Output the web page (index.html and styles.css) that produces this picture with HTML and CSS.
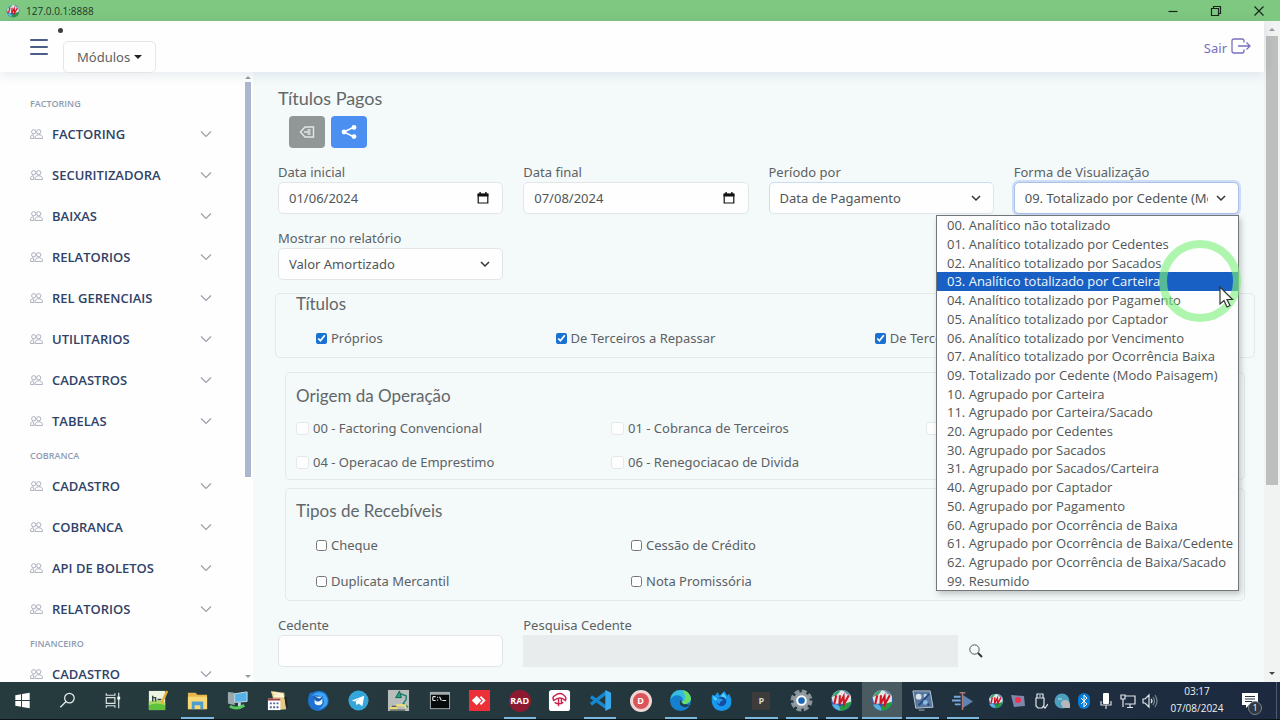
FILE: index.html
```html
<!DOCTYPE html>
<html lang="pt-BR">
<head>
<meta charset="utf-8">
<meta name="viewport" content="width=device-width, initial-scale=1">
<title>127.0.0.1:8888</title>
<link rel="stylesheet" href="styles.css">
</head>
<body>
<svg class="defs" aria-hidden="true">
  <defs>
    <symbol id="people" viewBox="0 0 14 12"><g fill="none" stroke="currentColor" stroke-width="1"><circle cx="4" cy="3.6" r="2.3"/><circle cx="9.4" cy="3.6" r="2.3"/><path d="M.6 10.8V9.4C.8 7.6 2 6.8 3.6 6.8M.6 10.8h4M5.6 10.8V9.6c.2-1.8 1.6-2.8 3.8-2.8s3.8 1 4 2.8v1.2zM3.4 7.2l1 3.2"/></g></symbol>
    <symbol id="chevron" viewBox="0 0 12 8"><path d="M1 1.5l5 5 5-5" fill="none" stroke="currentColor" stroke-width="1.1"/></symbol>
    <symbol id="calendar" viewBox="0 0 12 12"><path d="M1.2 2.4h9.6v8.6H1.2z" fill="none" stroke="#111" stroke-width="1.2"/><path d="M.6 1.4h10.8v3H.6zM2.4 0h1.4v2H2.4zM8.2 0h1.4v2H8.2z" fill="#111"/></symbol>
    <symbol id="iw" viewBox="0 0 22 22"><circle cx="11" cy="11" r="10" fill="#2c5fb4"/><path d="M1.500 8a10 10 0 0 1 18.500-1v7H3z" fill="#dfe6e6"/><path d="M1.500 8q3-6 9-7l-3 4z" fill="#3f9f71"/><path d="M12 1q5 0 8 5l-4-1z" fill="#6b8fa8"/><path d="M2 15q6-3 9 6-7-1-9-6z" fill="#58b4df"/><path d="M10 21q-2-5 4-7l6.500-2q-1 8-10.500 9z" fill="#2a9a3e"/><path d="M6 6L4 14.500M9.500 6L9 14.500 13 7l.3 7.500L18 6" fill="none" stroke="#cf1526" stroke-width="2"/></symbol>
  </defs>
</svg>

<div class="window">
  <header class="titlebar">
    <svg class="titlebar__logo"><use href="#iw"/></svg>
    <span class="titlebar__text">127.0.0.1:8888</span>
    <div class="titlebar__buttons">
      <button class="winbtn" type="button" aria-label="Minimizar"><svg viewBox="0 0 12 12"><path d="M1.500 6.500h9"/></svg></button>
      <button class="winbtn" type="button" aria-label="Restaurar"><svg viewBox="0 0 12 12"><path d="M1.500 3.500h7v7h-7zM3.500 3.500v-2h7v7h-2"/></svg></button>
      <button class="winbtn" type="button" aria-label="Fechar"><svg viewBox="0 0 12 12"><path d="M1.500 1.500l9 9M10.500 1.500l-9 9"/></svg></button>
    </div>
  </header>

  <div class="viewport">
    <div class="page">
      <div class="topbar">
        <button class="burger" type="button" aria-label="Menu"><i></i><i></i><i></i></button>
        <div class="modules"><span class="modules__dot"></span><button class="modules__btn" type="button">Módulos<span class="caret"></span></button></div>
        <a class="logout" href="#">Sair
          <svg viewBox="0 0 20 16"><path d="M13 4.500V3q0-2-2-2H3Q1 1 1 3v10q0 2 2 2h8q2 0 2-2v-1.500M7 8h12M15.500 4.500L19 8l-3.500 3.500"/></svg></a>
      </div>

      <div class="shell">
        <nav class="sidebar">
          <div class="menu">
            <h2 class="menu__title">FACTORING</h2>
            <button class="menu__item" type="button"><svg class="menu__icon"><use href="#people"/></svg>FACTORING<svg class="menu__chev"><use href="#chevron"/></svg></button>
            <button class="menu__item" type="button"><svg class="menu__icon"><use href="#people"/></svg>SECURITIZADORA<svg class="menu__chev"><use href="#chevron"/></svg></button>
            <button class="menu__item" type="button"><svg class="menu__icon"><use href="#people"/></svg>BAIXAS<svg class="menu__chev"><use href="#chevron"/></svg></button>
            <button class="menu__item" type="button"><svg class="menu__icon"><use href="#people"/></svg>RELATORIOS<svg class="menu__chev"><use href="#chevron"/></svg></button>
            <button class="menu__item" type="button"><svg class="menu__icon"><use href="#people"/></svg>REL GERENCIAIS<svg class="menu__chev"><use href="#chevron"/></svg></button>
            <button class="menu__item" type="button"><svg class="menu__icon"><use href="#people"/></svg>UTILITARIOS<svg class="menu__chev"><use href="#chevron"/></svg></button>
            <button class="menu__item" type="button"><svg class="menu__icon"><use href="#people"/></svg>CADASTROS<svg class="menu__chev"><use href="#chevron"/></svg></button>
            <button class="menu__item" type="button"><svg class="menu__icon"><use href="#people"/></svg>TABELAS<svg class="menu__chev"><use href="#chevron"/></svg></button>
            <h2 class="menu__title">COBRANCA</h2>
            <button class="menu__item" type="button"><svg class="menu__icon"><use href="#people"/></svg>CADASTRO<svg class="menu__chev"><use href="#chevron"/></svg></button>
            <button class="menu__item" type="button"><svg class="menu__icon"><use href="#people"/></svg>COBRANCA<svg class="menu__chev"><use href="#chevron"/></svg></button>
            <button class="menu__item" type="button"><svg class="menu__icon"><use href="#people"/></svg>API DE BOLETOS<svg class="menu__chev"><use href="#chevron"/></svg></button>
            <button class="menu__item" type="button"><svg class="menu__icon"><use href="#people"/></svg>RELATORIOS<svg class="menu__chev"><use href="#chevron"/></svg></button>
            <h2 class="menu__title">FINANCEIRO</h2>
            <button class="menu__item" type="button"><svg class="menu__icon"><use href="#people"/></svg>CADASTRO<svg class="menu__chev"><use href="#chevron"/></svg></button>
          </div>
          <div class="minibar" aria-hidden="true"><span class="tri tri--up"></span><span class="minibar__thumb"></span><span class="minibar__rest"></span><span class="tri tri--down"></span></div>
        </nav>

        <main class="content">
          <h1 class="heading heading--page">Títulos Pagos</h1>
          <div class="actions">
            <button class="action action--grey" type="button" aria-label="Voltar"><svg viewBox="0 0 16 14"><path d="M6 2h8.500v10H6L1.500 7zM11.500 5H8.500M8.500 9h3M5 7h6.500"/></svg></button>
            <button class="action action--blue" type="button" aria-label="Compartilhar"><svg viewBox="0 0 16 14"><path d="M3 7l10-5M3 7l10 5"/><circle cx="3" cy="7" r="2.400"/><circle cx="13" cy="2.400" r="2.400"/><circle cx="13" cy="11.600" r="2.400"/></svg></button>
          </div>

          <div class="fields">
            <div class="field"><label for="ini">Data inicial</label>
              <div class="control"><input id="ini" type="text" value="01/06/2024"><button class="control__cal" type="button" aria-label="Calendário"><svg><use href="#calendar"/></svg></button></div></div>
            <div class="field"><label for="fim">Data final</label>
              <div class="control"><input id="fim" type="text" value="07/08/2024"><button class="control__cal" type="button" aria-label="Calendário"><svg><use href="#calendar"/></svg></button></div></div>
            <div class="field"><label for="per">Período por</label>
              <select class="select select--touched" id="per"><option>Data de Pagamento</option></select></div>
            <div class="field"><label for="forma">Forma de Visualização</label>
              <select class="select select--focus" id="forma"><option>09. Totalizado por Cedente (Modo Paisagem)</option></select>
              <ul class="options" role="listbox" aria-label="Forma de Visualização">
                <li role="option">00. Analítico não totalizado</li>
                <li role="option">01. Analítico totalizado por Cedentes</li>
                <li role="option">02. Analítico totalizado por Sacados</li>
                <li role="option" class="is-active" aria-selected="true">03. Analítico totalizado por Carteira</li>
                <li role="option">04. Analítico totalizado por Pagamento</li>
                <li role="option">05. Analítico totalizado por Captador</li>
                <li role="option">06. Analítico totalizado por Vencimento</li>
                <li role="option">07. Analítico totalizado por Ocorrência Baixa</li>
                <li role="option">09. Totalizado por Cedente (Modo Paisagem)</li>
                <li role="option">10. Agrupado por Carteira</li>
                <li role="option">11. Agrupado por Carteira/Sacado</li>
                <li role="option">20. Agrupado por Cedentes</li>
                <li role="option">30. Agrupado por Sacados</li>
                <li role="option">31. Agrupado por Sacados/Carteira</li>
                <li role="option">40. Agrupado por Captador</li>
                <li role="option">50. Agrupado por Pagamento</li>
                <li role="option">60. Agrupado por Ocorrência de Baixa</li>
                <li role="option">61. Agrupado por Ocorrência de Baixa/Cedente</li>
                <li role="option">62. Agrupado por Ocorrência de Baixa/Sacado</li>
                <li role="option">99. Resumido</li>
              </ul>
              <svg class="pointer" viewBox="0 0 84 84" aria-hidden="true"><circle cx="42" cy="42" r="37" fill="none" stroke="#7df07d" stroke-opacity=".62" stroke-width="8"/><path d="M62 48v17l4-3.500 3 6.500 3-1.500-3-6h5.500z" fill="#fff" stroke="#333" stroke-width="1.200"/></svg>
            </div>
            <div class="field"><label for="mostrar">Mostrar no relatório</label>
              <select class="select" id="mostrar"><option>Valor Amortizado</option></select></div>
          </div>

          <section class="box box--titles">
            <h2 class="heading">Títulos</h2>
            <div class="checks checks--titles">
              <label class="check"><input type="checkbox" checked>Próprios</label>
              <label class="check"><input type="checkbox" checked>De Terceiros a Repassar</label>
              <label class="check"><input type="checkbox" checked>De Terceiros</label>
            </div>
          </section>

          <section class="box box--origin">
            <h2 class="heading">Origem da Operação</h2>
            <div class="checks checks--soft">
              <label class="check"><input type="checkbox">00 - Factoring Convencional</label>
              <label class="check"><input type="checkbox">01 - Cobranca de Terceiros</label>
              <label class="check"><input type="checkbox" aria-label="Outra operação"></label>
              <label class="check"><input type="checkbox">04 - Operacao de Emprestimo</label>
              <label class="check"><input type="checkbox">06 - Renegociacao de Divida</label>
            </div>
          </section>

          <section class="box box--types">
            <h2 class="heading">Tipos de Recebíveis</h2>
            <div class="checks checks--types">
              <label class="check"><input type="checkbox">Cheque</label>
              <label class="check"><input type="checkbox">Cessão de Crédito</label>
              <span></span>
              <label class="check"><input type="checkbox">Duplicata Mercantil</label>
              <label class="check"><input type="checkbox">Nota Promissória</label>
            </div>
          </section>

          <div class="fields fields--last">
            <div class="field"><label for="ced">Cedente</label><div class="control"><input id="ced" type="text"></div></div>
            <div class="field field--wide"><label for="pesq">Pesquisa Cedente</label>
              <div class="lookup"><input class="lookup__input" id="pesq" type="text" disabled>
                <button class="lookup__btn" type="button" aria-label="Pesquisar"><svg viewBox="0 0 14 14"><circle cx="5.500" cy="5.500" r="4.700" fill="none" stroke="#555"/><path d="M9 9l4 4" stroke="#333" stroke-width="2"/></svg></button></div></div>
          </div>
        </main>
      </div>
    </div>
    <div class="scroll" aria-hidden="true"><span class="tri tri--up"></span><span class="scroll__thumb"></span><span class="scroll__rest"></span><span class="tri tri--down tri--dark"></span></div>
  </div>

  <footer class="taskbar">
    <div class="system">
      <button class="task" type="button" aria-label="Iniciar"><svg viewBox="0 0 24 24"><path fill="#fff" d="M4.500 6.500l6-1v6h-6zM11.500 5.300l8-1.300v7.500h-8zM4.500 12.500h6v6l-6-1zM11.500 12.500h8V20l-8-1.300z"/></svg></button>
      <button class="task" type="button" aria-label="Pesquisar"><svg viewBox="0 0 24 24" fill="none" stroke="#e8eeee" stroke-width="1.300"><circle cx="14" cy="9.500" r="5"/><path d="M10.500 13L4.500 19"/></svg></button>
      <button class="task" type="button" aria-label="Visão de tarefas"><svg viewBox="0 0 24 24" fill="none" stroke="#dfe6e6" stroke-width="1.200"><path d="M5.500 4.500v2h9v-2M5.500 9h9v6h-9zM5.500 19.500v-2h9v2M18.500 4v16"/><path d="M17 8h3v3h-3z" fill="#fff" stroke="none"/></svg></button>
    </div>
    <div class="apps">
      <button class="task" type="button" aria-label="Editor"><svg viewBox="0 0 24 24"><path fill="#edf3df" d="M3 2h17v20H3z"/><path fill="#5fc23d" d="M3 15q9-5 17 0v7H3z"/><path fill="#a9db63" d="M3 13q9-3 17 1v3q-9-4-17 0z"/><path d="M7 7v6M7 9h3v4M12 11h4" stroke="#344" stroke-width="1.500" fill="none"/><path d="M22 2l-6 13" stroke="#e5b236" stroke-width="2.500"/></svg></button>
      <button class="task task--open" type="button" aria-label="Arquivos"><svg viewBox="0 0 24 24"><path fill="#e9b44a" d="M2 4h8l2 2h10v15H2z"/><path fill="#f8d775" d="M2 8h20v13H2z"/><path fill="#4a9fd0" d="M6 13h12v8h-3v-4H9v4H6z"/></svg></button>
      <button class="task" type="button" aria-label="Acesso remoto"><svg viewBox="0 0 24 24"><path fill="#9aa8b0" d="M2 3l7 1v13l-7-2z"/><path fill="#57b2ea" stroke="#c4d9e4" d="M9 5l13-2v10l-13 1z"/><path d="M14 14v4" stroke="#c4d9e4" stroke-width="3"/><path d="M4 18q8 4 15-1" stroke="#55c95d" stroke-width="3" fill="none"/></svg></button>
      <button class="task" type="button" aria-label="Agenda"><svg viewBox="0 0 24 24"><path fill="#e3c986" d="M5 2l14 2 2 17-10 1z"/><path d="M7 4l11 2M8 7l11 1" stroke="#fff8df" stroke-width="2"/><path fill="#fff" d="M2 10h13v12H2z"/><path fill="#a43b42" d="M2 10h13v2H2z"/><path d="M4 15h9M4 19h9" stroke="#55649a" stroke-width="2" stroke-dasharray="2 1.500"/><path d="M20 8l2 11" stroke="#222" stroke-width="2"/></svg></button>
      <button class="task" type="button" aria-label="Thunderbird"><svg viewBox="0 0 24 24"><path fill="#1d72d2" d="M3 4q3 0 4-1 7-3 12 1 5 5 3 12-4 7-11 7Q2 22 1 13q0-4 2-9z"/><path fill="#3ea6f4" d="M5 7q6-6 13-2 5 5 3 11-4 5-9 5 8-4 5-11-4-5-12-3z"/><path fill="#edf4f9" d="M8 8h8v7q-4 4-8 0z"/><path fill="#1760b5" d="M6 7q3 7 6 6 4-1 5-6l-4 3z"/></svg></button>
      <button class="task" type="button" aria-label="Telegram"><svg viewBox="0 0 24 24"><circle cx="12" cy="12" r="10.500" fill="#35a6da"/><path fill="#fff" d="M5 12l13-5-2 11-4-3-2 2-1-4 5-4-6 4z"/></svg></button>
      <button class="task" type="button" aria-label="Luminária"><svg viewBox="0 0 24 24"><path fill="#b9bdbb" d="M1 1h22v22H1z"/><path d="M14 5l6 2v4l-3 4 5 4" stroke="#178678" stroke-width="1.500" fill="none"/><path fill="#21a487" stroke="#145f50" d="M9 9l4-7 2 7z"/><path d="M3 20h7v-3h9v3" stroke="#f0df75" stroke-width="2" fill="none"/><path d="M3 22h16M5 18h5" stroke="#353c34"/></svg></button>
      <button class="task" type="button" aria-label="Terminal"><svg viewBox="0 0 24 24"><path fill="#a4adad" d="M2 3h21v18H2z"/><path fill="#080b0b" d="M3 6h19v14H3z"/><path d="M5 8v4M5 8h3M5 12h3M10 8v1M10 11v1M12 8l2 4M15 12h4" stroke="#e7e7e7" stroke-width="1.200"/></svg></button>
      <button class="task" type="button" aria-label="AnyDesk"><svg viewBox="0 0 24 24"><path fill="#ec3037" d="M1 1h22v22H1z"/><path fill="#fff" d="M9 7l5 5-5 5-5-5z"/><path d="M13 8l4 4-4 4" fill="none" stroke="#fff" stroke-width="2"/></svg></button>
      <button class="task task--open" type="button" aria-label="RAD Studio"><span class="disc disc--rad">RAD</span></button>
      <button class="task" type="button" aria-label="Banco"><svg viewBox="0 0 24 24"><rect x="1" y="1" width="22" height="22" rx="3" fill="#fff"/><path d="M6 12q-2-3 1-5 5-4 9-1 4 3 2 6-5-5-12 0zM11 10v8M14 10v6M7 14q4 3 9 0" fill="none" stroke="#c9204d" stroke-width="1.500"/></svg></button>
      <button class="task task--open" type="button" aria-label="VS Code"><svg viewBox="0 0 24 24"><path d="M2 8l17 12M2 16L19 3" stroke="#1686ce" stroke-width="3.500"/><path fill="#38a9ec" d="M17 1l6 3v16l-6 3z"/></svg></button>
      <button class="task" type="button" aria-label="D"><span class="disc disc--d">D</span></button>
      <button class="task task--open" type="button" aria-label="Edge"><svg viewBox="0 0 24 24"><circle cx="12" cy="12" r="11" fill="#1680ce"/><path fill="#37bce0" d="M1 11Q3 1 12 1q9 0 11 9-1 6-8 6l-2-2q3-3 0-6-6-4-12 3z"/><path fill="#6add69" d="M14 1q9 2 9 10-2 5-8 5l-2-2q5-3 4-7z"/><path fill="#1c3b4b" d="M12 11q-3 7 5 8l5-2q-2-1-7-1-3-2-3-5z"/></svg></button>
      <button class="task" type="button" aria-label="Firefox Developer"><svg viewBox="0 0 24 24"><path fill="#1799ef" d="M2 6l3 1 3-4 2 4 5-5 3 5 2-2 2 5q2 12-10 13Q0 22 2 6z"/><path fill="#54d3f6" d="M3 7l6 4 5-7 3 5-4 6-9-4z"/><circle cx="12" cy="13" r="5" fill="#164da2"/><path fill="#249de9" d="M7 10q4-1 7 2-4 0-4 4-4-2-3-6z"/></svg></button>
      <button class="task task--open" type="button" aria-label="P"><span class="disc disc--p">P</span></button>
      <button class="task task--open" type="button" aria-label="Configurações"><svg viewBox="0 0 24 24"><circle cx="12" cy="12" r="9.500" fill="none" stroke="#8a939a" stroke-width="4" stroke-dasharray="5 2.460"/><circle cx="12" cy="12" r="8.500" fill="#929ba2"/><circle cx="12" cy="12" r="5.500" fill="#fff"/><circle cx="12" cy="12" r="3.500" fill="#1b67b5"/></svg></button>
      <button class="task task--open" type="button" aria-label="IntraWeb"><svg><use href="#iw"/></svg></button>
      <button class="task task--active" type="button" aria-label="IntraWeb ativo"><svg><use href="#iw"/></svg></button>
      <button class="task task--open" type="button" aria-label="Projeto"><svg viewBox="0 0 24 24"><path fill="#58779f" stroke="#b8c7d8" d="M2 2h18l3 17-18 1z"/><circle cx="8" cy="8" r="3" fill="#dbe3e9"/><circle cx="15" cy="7" r="2" fill="#b5d2e8"/><path d="M8 17l11-12M13 12l6 5" stroke="#284a7d" stroke-width="2"/><circle cx="15" cy="14" r="2.500" fill="#8ab9e8"/><path d="M8 22h6" stroke="#adb7c1"/></svg></button>
      <button class="task task--open" type="button" aria-label="Serviço"><svg viewBox="0 0 24 24"><path d="M3 8h7M1 12h9M4 16h6" stroke="#78a9dc" stroke-width="2"/><path fill="#5c83b5" d="M12 6l11 7-11 7z"/><path d="M12 4v18M9 4h6" stroke="#b07774" stroke-width="1.500"/></svg></button>
    </div>
    <div class="tray">
      <svg><use href="#iw"/></svg>
      <svg viewBox="0 0 16 16"><path fill="#7d86ac" d="M1 2l13 1 1 10-11 1z"/><circle cx="8" cy="7" r="3" fill="#ee3350"/></svg>
      <svg viewBox="0 0 16 16" fill="none" stroke="#e2e7eb" stroke-width="1.200"><path d="M5 5V1h6v4M4 5h8v7l-2 3H6l-2-2zM11 13l2 2 3-4M7 3h2"/></svg>
      <svg viewBox="0 0 16 16"><circle cx="8" cy="8" r="7.500" fill="#4d9fbd"/><path fill="#b4b8b9" d="M7 11q0-4 4-4t5 4v4H9z"/><path d="M4 6h4" stroke="#b8e6ef"/></svg>
      <svg viewBox="0 0 16 16"><rect x="2" width="12" height="16" rx="6" fill="#087bd4"/><path d="M5 5l6 6-3 3V2l3 3-6 6" fill="none" stroke="#fff"/></svg>
      <svg viewBox="0 0 16 16"><rect x="5" width="6" height="11" rx="1" fill="#fff"/><path d="M3 8v4h10V8M8 12v4" fill="none" stroke="#d5dadd" stroke-width="1.200"/></svg>
      <svg viewBox="0 0 16 16" fill="none" stroke="#e2e7eb" stroke-width="1.200"><path d="M5 3h10v8H5M10 11v3M7 14.500h6M1 2h4v4H1zM3 6v8"/></svg>
      <svg viewBox="0 0 16 16" fill="none" stroke="#e2e7eb" stroke-width="1.200"><path d="M1 6h2l4-4v12l-4-4H1zM9 6q2 2 0 4"/><path d="M11 4q3 4 0 8M13 2q4 6 0 12" stroke="#7b8794"/></svg>
    </div>
    <div class="clock"><span>03:17</span><span>07/08/2024</span></div>
    <button class="notice" type="button" aria-label="Notificações"><svg viewBox="0 0 18 18"><path fill="#fff" d="M1 1h16v12H8l-3 3v-3H1z"/><path d="M4 4.500h10M4 7h10M4 9.500h7" stroke="#263343"/></svg><span class="notice__count">1</span></button>
    <span class="desktop-edge"></span>
  </footer>
</div>
</body>
</html>
```

FILE: styles.css
```css
* { box-sizing: border-box; }
body { margin: 0; font-family: "Noto Sans", "Open Sans", sans-serif; font-size: 13px; color: #5c6264; background: #fdfefd; }
button, input, select { font: inherit; color: inherit; }
button { border: 0; padding: 0; background: none; }
h1, h2, ul { margin: 0; padding: 0; }
.defs { position: absolute; width: 0; height: 0; }
.window { display: flex; flex-direction: column; height: 100vh; overflow: hidden; }

.titlebar { display: flex; align-items: center; flex: none; height: 21px; padding-left: 6px; background: #7fc881; color: #22372a; font-family: "Open Sans", sans-serif; font-size: 10px; }
.titlebar__logo { width: 14px; height: 14px; margin-right: 6px; }
.titlebar__buttons { display: flex; margin-left: auto; }
.winbtn { display: flex; justify-content: center; width: 43px; }
.winbtn svg { width: 12px; height: 12px; fill: none; stroke: #17271b; stroke-width: 1.2; }

.viewport { display: flex; flex: 1; min-height: 0; }
.page { display: flex; flex-direction: column; flex: 1; min-width: 0; }
.topbar { display: flex; align-items: flex-start; flex: none; height: 51px; padding: 0 13px 0 30px; background: #fdfefd; box-shadow: 0 2px 12px rgba(1, 41, 112, .11); position: relative; z-index: 1; }
.burger { display: grid; gap: 5px; width: 18px; margin-top: 18px; }
.burger i { height: 2px; border-radius: 1px; background: #4c5d88; }
.modules { position: relative; margin: 20px 0 0 15px; }
.modules__dot { position: absolute; left: -5px; top: -13px; width: 5px; height: 5px; border-radius: 50%; background: #3c3f40; }
.modules__btn { display: flex; align-items: center; gap: 4px; height: 32px; padding: 0 13px; border: 1px solid #e4e6e8; border-radius: 5px; background: #fefefe; }
.caret { border: 4px solid transparent; border-top-color: #222; border-bottom: 0; }
.logout { display: flex; align-items: center; gap: 4px; margin: 17px 0 0 auto; color: #7770bf; text-decoration: none; line-height: 20px; }
.logout svg { width: 20px; height: 16px; margin-bottom: 4px; fill: none; stroke: currentColor; stroke-width: 1.3; }

.shell { display: flex; flex: 1; min-height: 0; }
.sidebar { display: flex; flex: none; width: 253px; background: #fdfefd; overflow: hidden; }
.menu { flex: 1; padding: 17px 31px 0 30px; font-family: "Open Sans", sans-serif; }
.menu__title { height: 24px; padding-top: 4px; font-size: 9px; line-height: 22px; font-weight: 600; color: #8f9bb3; }
.menu__item { display: flex; align-items: center; width: 100%; height: 41px; color: #304268; font-size: 13px; font-weight: 600; }
.menu__icon { width: 13px; height: 12px; margin-right: 9px; color: #a5aabb; }
.menu__chev { width: 12px; height: 8px; margin-left: auto; color: #969da8; }
.minibar { display: flex; flex-direction: column; align-items: center; width: 9px; margin-right: 1px; padding: 4px 0; }
.minibar__thumb { flex: 2 1 0; width: 6px; margin-top: 3px; background: #acb6ce; }
.minibar__rest { flex: 1 1 0; }
.tri { border: 3px solid transparent; flex: none; }
.tri--up { border-bottom-color: #9a9d9f; border-top: 0; }
.tri--down { border-top-color: #9a9d9f; border-bottom: 0; }
.tri--dark { border-top-color: #444; }
.scroll { display: flex; flex-direction: column; align-items: center; flex: none; width: 16px; padding: 7px 0; background: #f1f3f2; }
.scroll__thumb { flex: 447 1 0; width: 12px; margin-top: 5px; background: #bcbfbd; }
.scroll__rest { flex: 186 1 0; }

.content { flex: 1; min-width: 0; padding: 15px 25px 0; background: #f4f9fa; }
.heading { font-family: Lato, "Open Sans", sans-serif; font-size: 17px; line-height: 22px; font-weight: 400; color: #626769; }
.heading--page { font-size: 18px; }
.actions { display: flex; gap: 6px; padding: 7px 11px 14px; }
.action { display: flex; align-items: center; justify-content: center; width: 36px; height: 32px; border-radius: 4px; }
.action--grey { background: #919796; color: #e4e8e7; }
.action--blue { background: #4b8ff1; color: #fff; }
.action svg { width: 16px; height: 14px; fill: none; stroke: currentColor; stroke-width: 1.4; }
.action--blue circle { fill: currentColor; stroke: none; }

.fields { display: grid; grid-template-columns: repeat(4, minmax(0, 1fr)); gap: 14px 20px; }
.field { position: relative; }
.field--wide { grid-column: span 2; }
.field label { display: block; line-height: 20px; }
.control { display: flex; align-items: center; height: 32px; padding-right: 13px; border: 1px solid #e2e6e9; border-radius: 5px; background: #fefefe; color: #505657; }
.control input { flex: 1; min-width: 0; height: 30px; padding: 0 10px; border: 0; background: none; outline: 0; }
.control__cal svg { display: block; width: 12px; height: 12px; }
.select { display: block; width: 100%; height: 32px; padding: 0 30px 0 10px; border: 1px solid #e2e6e9; border-radius: 5px; appearance: none; color: #505657; background: #fefefe url("data:image/svg+xml,%3Csvg xmlns='http://www.w3.org/2000/svg' viewBox='0 0 10 8'%3E%3Cpath d='M1 2l4 4 4-4' fill='none' stroke='%23333' stroke-width='1.5'/%3E%3C/svg%3E") no-repeat right 12px center / 10px 8px; }
.select--touched { border-top-color: #c9dcf3; border-left-color: #c9dcf3; }
.select--focus { border-color: #a9c0ea; box-shadow: 0 0 0 2px #cddcf7; }
.options { position: absolute; z-index: 2; top: 53px; right: 0; display: grid; grid-template-columns: minmax(0, 1fr); grid-auto-rows: 1fr; width: 303px; height: 376px; list-style: none; border: 1px solid #727879; background: #fefefe; box-shadow: 2px 3px 6px rgba(0, 0, 0, .22); color: #505657; font-family: "Open Sans", sans-serif; }
.options li { display: flex; align-items: center; min-height: 0; padding-left: 10px; line-height: 18px; white-space: nowrap; }
.options .is-active { background: #1860c4; color: #f3f7fc; }
.pointer { position: absolute; z-index: 3; top: 77px; right: -3px; width: 84px; height: 84px; pointer-events: none; }

.box { border: 1px solid #e3e8ea; border-radius: 5px; }
.box--titles { margin: 13px -16px 0 -3px; padding: 0 10px 2px; }
.box--titles .heading { padding-left: 10px; line-height: 20px; }
.box--origin { margin: 14px -6px 0 7px; padding: 12px 3px 0 10px; }
.box--types { margin: 8px -6px 0 7px; padding: 11px 3px 1px 10px; }
.checks { display: grid; grid-template-columns: repeat(3, 1fr); padding-top: 5px; }
.check { display: flex; align-items: center; gap: 4px; height: 34px; }
.check input { width: 11px; height: 11px; margin: 0; accent-color: #1972d2; }
.checks--titles { grid-template-columns: 3fr 4fr 5fr; padding-top: 7px; }
.checks--titles .check { padding-left: 30px; }
.checks--soft { padding-top: 4px; }
.checks--soft .check input { appearance: none; width: 13px; height: 13px; border: 1px solid #e6e9eb; border-radius: 3px; background: #fefefe; }
.checks--types .check { height: 36px; padding-left: 20px; }
.fields--last { margin-top: 14px; }
.lookup { display: flex; align-items: center; gap: 11px; }
.lookup__input { flex: 1; min-width: 0; height: 32px; border: 0; background: #e8eced; }
.lookup__btn { flex: none; width: 25px; text-align: left; }
.lookup__btn svg { display: block; width: 14px; height: 14px; }

.taskbar { display: flex; flex: none; height: 38px; border-bottom: 1px solid #0a1518; background: linear-gradient(90deg, #263b3e, #23363d 60%, #1c2940); font-family: "Open Sans", sans-serif; }
.system { display: flex; flex: none; width: 135px; margin-right: 2px; }
.apps { display: flex; flex: 1; }
.task { position: relative; display: flex; align-items: center; justify-content: center; flex: 1 1 0; }
.task svg { width: 23px; height: 23px; }
.task--open::after, .task--active::after { content: ""; position: absolute; bottom: 0; left: 4px; right: 4px; height: 2px; background: #7db9df; }
.task--active { background: #4a5b61; }
.task--active::after { left: 0; right: 0; }
.disc { display: flex; align-items: center; justify-content: center; width: 22px; height: 22px; border-radius: 50%; color: #fff; font-size: 9px; font-weight: 700; }
.disc--rad { background: #8d1a30; }
.disc--d { border: 3px solid #f0d6d5; background: #d9555a; }
.disc--p { width: 18px; height: 18px; border-radius: 1px; background: #3d3c3b; color: #d9d7d4; }
.tray { display: flex; align-items: center; gap: 6px; flex: none; padding: 0 5px; }
.tray svg { width: 16px; height: 16px; }
.clock { display: flex; flex-direction: column; align-items: center; justify-content: center; flex: none; width: 68px; padding-bottom: 2px; color: #eef1f4; font-size: 10px; line-height: 17px; }
.notice { position: relative; flex: none; width: 40px; padding-left: 10px; }
.notice svg { display: block; width: 18px; height: 18px; }
.notice__count { position: absolute; left: 17px; bottom: 4px; width: 14px; height: 14px; border: 1px solid #7c848c; border-radius: 50%; background: #303942; color: #fff; font-size: 9px; line-height: 12px; }
.desktop-edge { width: 1px; margin: 0 3px 0 5px; background: #4f5b6d; }
```
